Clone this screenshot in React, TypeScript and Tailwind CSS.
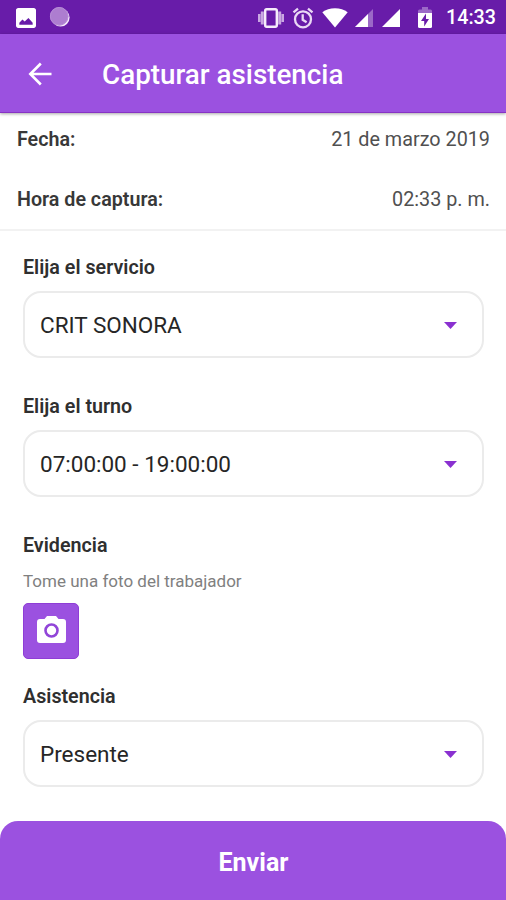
import React from "react";

function StatusBar() {
  return (
    <div className="flex h-[34px] shrink-0 items-center bg-[#681ca9] pr-[10px] pl-4 text-white">
      <svg width="20" height="20" viewBox="3 3 18 18" fill="#fff" className="mt-px shrink-0">
        <path d="M21 19V5c0-1.100-.9-2-2-2H5c-1.100 0-2 .9-2 2v14c0 1.100.9 2 2 2h14c1.100 0 2-.9 2-2zM6 18v-1.700l2.800-3 2 1.800 3.400-3.200 3.800 4.300V18z" />
      </svg>
      <svg width="22" height="22" viewBox="0 0 22 22" className="ml-[13px] shrink-0">
        <circle cx="11.600" cy="11.600" r="9" fill="#f3e6fa" />
        <circle cx="10.200" cy="10.300" r="9.200" fill="#ad7dd0" />
        <circle cx="10.200" cy="10.300" r="8.800" fill="none" stroke="#b78dd6" strokeWidth="1" />
      </svg>
      <div className="ml-auto flex items-center pt-px">
        <svg width="26" height="22" viewBox="0 0 26 22" fill="none" className="shrink-0">
          <path d="M0 7h2.500v8H0zM2.800 4.500h3v13h-3zM20.200 4.500h3v13h-3zM23.500 7H26v8h-2.500z" fill="#c9a8e2" />
          <rect x="7.200" y="2.200" width="11.600" height="17.600" rx="1.500" stroke="#f6edfb" strokeWidth="2.400" />
        </svg>
        <svg width="22" height="22" viewBox="0 0 22 22" fill="none" stroke="#ead9f5" strokeWidth="2.300" className="ml-2 shrink-0">
          <circle cx="11" cy="12.300" r="8" />
          <path d="M1.500 5.300 6 1.600M20.500 5.300 16 1.600M10.700 7.300v5.500l3.900 2.400" />
        </svg>
        <svg width="26" height="20" viewBox="0 0 26 20" fill="#fff" className="ml-2 shrink-0">
          <path d="M13 19.500.3 4.300C3.800 1.500 8.100.2 13 .2s9.200 1.300 12.700 4.100z" />
        </svg>
        <svg width="18" height="18" viewBox="0 0 18 18" className="mt-px ml-[7px] shrink-0">
          <path d="M18 0v18H0z" fill="#9b69c7" />
          <path d="M13 5V18H0z" fill="#fff" />
        </svg>
        <svg width="18" height="18" viewBox="0 0 18 18" className="mt-px ml-[9px] shrink-0">
          <path d="M18 0v18H0z" fill="#fff" />
        </svg>
        <svg width="14" height="21" viewBox="0 0 14 21" className="ml-[18px] shrink-0">
          <path d="M4 0h6v2.500h2.500q1.500 0 1.500 1.500v3H0V4q0-1.500 1.500-1.500H4z" fill="#9b69c7" />
          <path d="M0 6h14v13.500q0 1.500-1.500 1.500h-11Q0 21 0 19.500z" fill="#fff" />
          <path d="M8 6.500 3 14h3.200v5.500L11 12H8z" fill="#681ca9" />
        </svg>
        <span className="ml-[14px] w-[50px] text-[19.700px] leading-none font-medium whitespace-nowrap">14:33</span>
      </div>
    </div>
  );
}

function Header() {
  return (
    <header className="z-10 flex h-[79px] shrink-0 items-center border-b border-[#8733c5] bg-[#9b51e0] pt-[3px] pl-7 text-white shadow-[0_1px_3px_rgba(0,0,0,0.35)]">
      <svg width="24" height="24" viewBox="0 0 24 24" fill="none" stroke="#fff" strokeWidth="2.600" className="-mt-px shrink-0">
        <path d="M23.500 12H2.500M12.800 1.500 2.300 12l10.500 10.500" />
      </svg>
      <h1 className="ml-[50px] pt-px text-[27.800px] leading-none font-medium">Capturar asistencia</h1>
    </header>
  );
}

function Select({ label, value, className }: { label: string; value: string; className: string }) {
  return (
    <div className={className}>
      <div className="pt-px text-[19.700px] leading-6 font-semibold text-[#2f2f2f]">{label}</div>
      <button className="mt-[11px] flex h-[67px] w-full items-center justify-between rounded-[18px] border-2 border-[#ebebeb] bg-white pr-[25px] pl-[15px] text-[22.500px] text-[#262626]">
        <span className="pt-[3px]">{value}</span>
        <svg width="13" height="7" viewBox="0 0 13 7" fill="#8a30d0" className="mt-px">
          <path d="M0 0h13L6.500 7z" />
        </svg>
      </button>
    </div>
  );
}

export default function App() {
  return (
    <div className="flex h-[900px] w-[506px] flex-col overflow-hidden bg-white font-['Roboto',sans-serif]">
      <StatusBar />
      <Header />
      <section className="shrink-0 border-b-2 border-[#f2f2f2] pr-4 pl-[17px] text-[19.800px] text-[#505050]">
        <div className="flex h-[52px] items-center justify-between pt-px">
          <span className="text-[19.700px] font-semibold text-[#383838]">Fecha:</span>
          <span>21 de marzo 2019</span>
        </div>
        <div className="flex h-[64px] items-center justify-between pt-[6px]">
          <span className="text-[19.700px] font-semibold text-[#383838]">Hora de captura:</span>
          <span>02:33 p. m.</span>
        </div>
      </section>
      <main className="flex flex-1 flex-col pt-6 pr-[22px] pl-[23px]">
        <Select label="Elija el servicio" value="CRIT SONORA" className="h-[139px]" />
        <Select label="Elija el turno" value="07:00:00 - 19:00:00" className="h-[139px]" />
        <div className="h-[151px]">
          <div className="pt-px text-[19.700px] leading-6 font-semibold text-[#2f2f2f]">Evidencia</div>
          <div className="mt-[11px] text-[17px] leading-6 text-[#808080]">Tome una foto del trabajador</div>
          <button className="mt-[10px] flex h-14 w-14 items-center justify-center rounded-[5px] border border-[#8f3dd6] bg-[#9b51e0]">
            <svg width="29" height="27" viewBox="0 0 29 27" className="-mt-[3px]">
              <path d="M10 0h9l2.500 3H26q3 0 3 3v18q0 3-3 3H3q-3 0-3-3V6q0-3 3-3h4.500z" fill="#fff" />
              <circle cx="14.500" cy="14.500" r="6" fill="#fff" stroke="#9145d8" strokeWidth="2.600" />
            </svg>
          </button>
        </div>
        <Select label="Asistencia" value="Presente" className="" />
      </main>
      <button className="flex h-[79px] shrink-0 items-center justify-center rounded-t-[18px] bg-[#9b51e0] pt-[5px] pl-px text-[25px] font-bold text-white">
        Enviar
      </button>
    </div>
  );
}
